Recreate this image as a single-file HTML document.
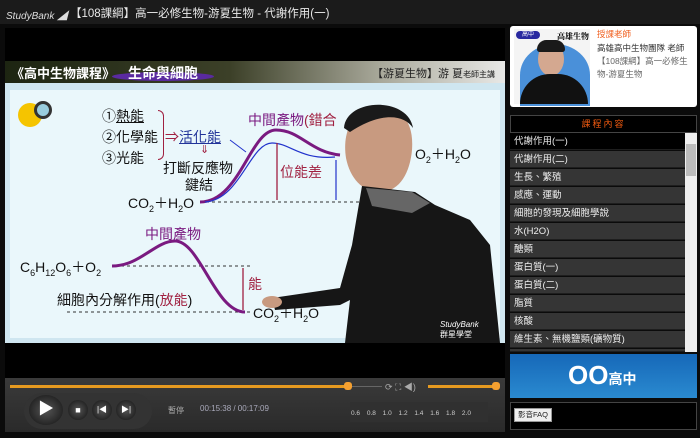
<!DOCTYPE html>
<html><head><meta charset="utf-8"><style>
*{margin:0;padding:0;box-sizing:border-box}
body{width:700px;height:438px;background:#0b0b0b;position:relative;overflow:hidden;font-family:"Liberation Sans","Noto Sans CJK TC",sans-serif}
.a{position:absolute;white-space:nowrap}
.sl{font-size:14px;color:#111}
.row{position:absolute;left:510px;width:175px;height:17px;background:#353535;color:#eee;font-size:9.5px;line-height:17px;padding-left:4px;border-bottom:1px solid #1e1e1e}
</style></head><body>
<div class="a" style="left:0;top:0;width:700px;height:24px;background:#1b1b1b"></div>
<div class="a" style="left:6px;top:7px;color:#ddd;font-size:10px;font-style:italic">StudyBank ◢</div>
<div class="a" style="left:70px;top:5px;color:#e8e8e8;font-size:11.5px">【108課綱】高一必修生物-游夏生物 - 代謝作用(一)</div>
<div class="a" style="left:5px;top:28px;width:500px;height:350px;background:#000"></div>
<div class="a" style="left:5px;top:61px;width:500px;height:22px;background:linear-gradient(90deg,#1d2512 0%,#3c4028 45%,#a8a89a 75%,#e8e8e6 100%)"></div>
<div class="a" style="left:112px;top:72px;width:102px;height:9px;border-radius:50%;background:#5a2aa0"></div>
<div class="a" style="left:11px;top:63px;color:#fff;font-size:13px;font-weight:bold">《高中生物課程》</div>
<div class="a" style="left:128px;top:63px;color:#fff;font-size:14px;font-weight:bold">生命與細胞</div>
<div class="a" style="left:372px;top:65px;color:#222;font-size:11px">【游夏生物】游 夏<span style="font-size:8px">老師主講</span></div>
<div class="a" style="left:5px;top:83px;width:500px;height:260px;background:#cfe6f0"></div>
<div class="a" style="left:10px;top:90px;width:490px;height:248px;background:#eaf7fb"></div>
<div class="a" style="left:18px;top:103px;width:24px;height:24px;border-radius:50%;background:#f5c400"></div>
<div class="a" style="left:34px;top:101px;width:18px;height:18px;border-radius:50%;border:3px solid #333;background:#9cd"></div>
<div class="a sl" style="left:102px;top:106px">①<u>熱能</u></div>
<div class="a sl" style="left:102px;top:127px">②化學能</div>
<div class="a sl" style="left:102px;top:148px">③光能</div>
<div class="a" style="left:158px;top:110px;width:6px;height:50px;border:1.5px solid #a02040;border-left:none;border-radius:0 6px 6px 0"></div>
<div class="a sl" style="left:165px;top:127px;color:#a02040">⇒<span style="color:#223399;text-decoration:underline">活化能</span></div>
<div class="a sl" style="left:200px;top:143px;font-size:11px;color:#a02040">⇓</div>
<div class="a sl" style="left:163px;top:158px">打斷反應物</div>
<div class="a sl" style="left:185px;top:175px">鍵結</div>
<div class="a sl" style="left:128px;top:193px">CO<sub style="font-size:9px">2</sub>＋H<sub style="font-size:9px">2</sub>O</div>
<div class="a sl" style="left:248px;top:110px;color:#7a1a80">中間產物<span style="color:#a02040">(錯合</span></div>
<div class="a sl" style="left:280px;top:162px;color:#a02040">位能差</div>
<div class="a sl" style="left:415px;top:144px">O<sub style="font-size:9px">2</sub>＋H<sub style="font-size:9px">2</sub>O</div>
<div class="a sl" style="left:145px;top:224px;color:#7a1a80">中間產物</div>
<div class="a sl" style="left:20px;top:257px">C<sub style="font-size:9px">6</sub>H<sub style="font-size:9px">12</sub>O<sub style="font-size:9px">6</sub>＋O<sub style="font-size:9px">2</sub></div>
<div class="a sl" style="left:248px;top:274px;color:#a02040">能</div>
<div class="a sl" style="left:57px;top:290px">細胞內分解作用(<span style="color:#a02040">放能</span>)</div>
<div class="a sl" style="left:253px;top:303px">CO<sub style="font-size:9px">2</sub>＋H<sub style="font-size:9px">2</sub>O</div>
<svg class="a" style="left:0;top:0" width="505" height="345">
<g stroke="#333" stroke-dasharray="3,3" stroke-width="1"><line x1="200" y1="202" x2="370" y2="202"/><line x1="115" y1="266" x2="250" y2="266"/><line x1="67" y1="312" x2="250" y2="312"/></g>
<path d="M200 202 C240 202 250 130 276 130 C300 130 310 152 340 155" stroke="#7a1a80" stroke-width="3" fill="none"/>
<path d="M205 202 C240 200 250 143 272 143 C290 143 300 160 335 157" stroke="#2233cc" stroke-width="1.2" fill="none"/>
<path d="M112 266 C140 266 155 241 175 241 C200 241 215 312 245 312" stroke="#7a1a80" stroke-width="3" fill="none"/>
<g stroke="#a02040" stroke-width="1.3"><line x1="277" y1="143" x2="277" y2="200"/><line x1="243" y1="268" x2="243" y2="310"/></g>
<path d="M230 140 L246 152" stroke="#2233cc" stroke-width="1"/>
<path d="M336 160 L336 200" stroke="#2233cc" stroke-width="1.2"/>
<path d="M380 108 C352 108 342 132 346 158 C350 178 362 192 380 192 C400 192 410 172 412 150 C414 122 402 108 380 108Z" fill="#c89a80"/>
<path d="M344 128 C346 98 408 96 413 128 C404 114 380 112 350 132Z" fill="#1a1a1a"/>
<path d="M362 186 L415 192 L435 205 L470 220 L490 245 L500 343 L345 343 L350 300 L340 305 L275 310 L272 298 L340 288 L352 245 Z" fill="#161616"/>
<path d="M366 188 L412 192 L430 203 L412 213 L372 206Z" fill="#666"/>
<ellipse cx="272" cy="302" rx="10" ry="6" fill="#c89a80"/>
<text x="440" y="327" fill="#fff" font-size="8" font-style="italic">StudyBank</text>
<text x="440" y="337" fill="#fff" font-size="8">群星學堂</text>
</svg>
<div class="a" style="left:5px;top:378px;width:500px;height:54px;background:linear-gradient(#3a3a3a,#2a2a2a)"></div>
<div class="a" style="left:10px;top:385px;width:338px;height:3px;background:#e69a20"></div>
<div class="a" style="left:344px;top:382px;width:8px;height:8px;border-radius:3px;background:#f5a030"></div>
<div class="a" style="left:352px;top:386px;width:30px;height:1px;background:#666"></div>
<div class="a" style="left:385px;top:380px;color:#aaa;font-size:9px">⟳ ⛶ ◀)</div>
<div class="a" style="left:428px;top:385px;width:68px;height:3px;background:#e69a20"></div>
<div class="a" style="left:492px;top:382px;width:8px;height:8px;border-radius:3px;background:#f5a030"></div>
<div class="a" style="left:24px;top:393px;width:128px;height:36px;border-radius:18px;background:#333"></div>
<div class="a" style="left:29px;top:395px;width:34px;height:30px;border-radius:50%;background:radial-gradient(#555,#111);color:#fff;font-size:16px;text-align:center;line-height:30px">▶</div>
<div class="a" style="left:68px;top:400px;width:20px;height:20px;border-radius:50%;background:radial-gradient(#555,#111);color:#fff;font-size:9px;text-align:center;line-height:20px">■</div>
<div class="a" style="left:92px;top:400px;width:20px;height:20px;border-radius:50%;background:radial-gradient(#555,#111);color:#fff;font-size:8px;text-align:center;line-height:20px">|◀</div>
<div class="a" style="left:116px;top:400px;width:20px;height:20px;border-radius:50%;background:radial-gradient(#555,#111);color:#fff;font-size:8px;text-align:center;line-height:20px">▶|</div>
<div class="a" style="left:168px;top:405px;color:#aaa;font-size:8px">暫停</div>
<div class="a" style="left:200px;top:404px;color:#aab;font-size:8px">00:15:38 / 00:17:09</div>
<div class="a" style="left:350px;top:402px;width:138px;height:20px;background:#303030"></div>
<div class="a" style="left:351px;top:410px;color:#ccc;font-size:6.5px;word-spacing:5px">0.6 0.8 1.0 1.2 1.4 1.6 1.8 2.0</div>
<div class="a" style="left:510px;top:26px;width:187px;height:81px;background:#fff;border-radius:3px"></div>
<div class="a" style="left:514px;top:29px;width:76px;height:75px;background:#f4f4f4"></div>
<div class="a" style="left:520px;top:44px;width:70px;height:62px;border-radius:50% 50% 0 0;background:#4a90d9"></div>
<div class="a" style="left:538px;top:42px;width:26px;height:34px;border-radius:50%;background:#d4a890"></div>
<div class="a" style="left:537px;top:40px;width:28px;height:12px;border-radius:14px 14px 4px 4px;background:#1a1a1a"></div>
<div class="a" style="left:520px;top:74px;width:68px;height:30px;border-radius:30px 30px 0 0;background:#111"></div>
<div class="a" style="left:516px;top:31px;width:24px;height:8px;border-radius:4px;background:#2a2aa0;color:#fff;font-size:6px;text-align:center;line-height:8px">高中</div>
<div class="a" style="left:557px;top:31px;font-size:8px;font-weight:bold;font-family:'Liberation Serif','Noto Serif CJK SC',serif">高雄生物</div>
<div class="a" style="left:597px;top:28px;color:#f06020;font-size:8.5px">授課老師</div>
<div class="a" style="left:597px;top:42px;color:#333;font-size:8.5px">高雄高中生物團隊 老師</div>
<div class="a" style="left:597px;top:55px;color:#666;font-size:8.5px;line-height:13px;white-space:normal;width:96px">【108課綱】高一必修生物-游夏生物</div>
<div class="a" style="left:510px;top:115px;width:187px;height:18px;background:#000;border:1px solid #444;color:#f05a10;font-size:9px;text-align:center;line-height:16px;letter-spacing:2px">課程內容</div>
<div class="row" style="top:133px;background:#000">代謝作用(一)</div>
<div class="row" style="top:151px">代謝作用(二)</div>
<div class="row" style="top:169px">生長、繁殖</div>
<div class="row" style="top:187px">感應、運動</div>
<div class="row" style="top:205px">細胞的發現及細胞學說</div>
<div class="row" style="top:223px">水(H2O)</div>
<div class="row" style="top:241px">醣類</div>
<div class="row" style="top:259px">蛋白質(一)</div>
<div class="row" style="top:277px">蛋白質(二)</div>
<div class="row" style="top:295px">脂質</div>
<div class="row" style="top:313px">核酸</div>
<div class="row" style="top:331px">維生素、無機鹽類(礦物質)</div>
<div class="row" style="top:349px;height:3px"></div>
<div class="a" style="left:685px;top:133px;width:12px;height:219px;background:#eee"></div>
<div class="a" style="left:686px;top:144px;width:10px;height:32px;background:#bbb"></div>
<div class="a" style="left:510px;top:354px;width:187px;height:44px;background:linear-gradient(#1668b8,#2a8ad0)"></div>
<div class="a" style="left:568px;top:360px;color:#fff;font-size:26px;font-weight:bold">OO<span style="font-size:14px">高中</span></div>
<div class="a" style="left:510px;top:402px;width:187px;height:28px;background:#000;border:1px solid #444"></div>
<div class="a" style="left:514px;top:408px;width:38px;height:14px;background:#eee;border:1px solid #999;color:#222;font-size:7.5px;text-align:center;line-height:12px">影音FAQ</div>
</body></html>
